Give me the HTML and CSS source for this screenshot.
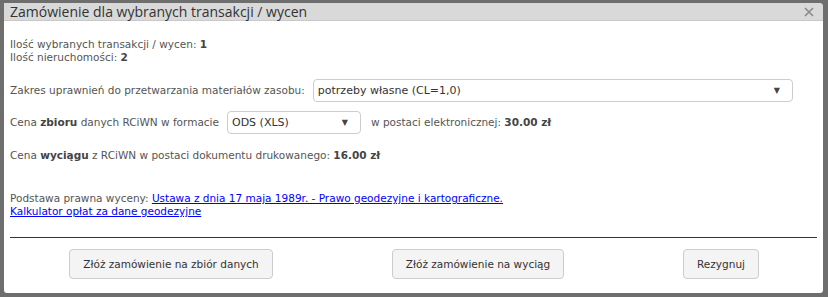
FILE: index.html
```html
<!DOCTYPE html>
<html lang="pl">
  <head>
    <meta charset="UTF-8" />
    <meta name="viewport" content="width=device-width, initial-scale=1.0" />
    <title>Zamówienie</title>
    <link rel="stylesheet" href="styles.css">
  </head>
  <body>
    <div class="dialog">
      <div class="dialog-title">
        <span>Zamówienie dla wybranych transakcji / wycen</span>
        <button class="dialog-close" title="Zamknij">
          <svg width="10" height="10" viewBox="0 0 10 10">
            <path d="M1 1L9 9M9 1L1 9" stroke="#8a8a8a" stroke-width="1.6" />
          </svg>
        </button>
      </div>
      <div class="dialog-body">
        <p class="counts">
          Ilość wybranych transakcji / wycen: <b>1</b><br />
          Ilość nieruchomości: <b>2</b>
        </p>

        <div class="row row-scope">
          <label>Zakres uprawnień do przetwarzania materiałów zasobu:</label>
          <div class="select select-wide">
            <span>potrzeby własne (CL=1,0)</span>
            <i class="arrow">▼</i>
          </div>
        </div>

        <div class="row row-format">
          <label>Cena <b>zbioru</b> danych RCiWN w formacie</label>
          <div class="select select-small">
            <span>ODS (XLS)</span>
            <i class="arrow">▼</i>
          </div>
          <span>w postaci elektronicznej: <b>30.00 zł</b></span>
        </div>

        <p class="row-print">Cena <b>wyciągu</b> z RCiWN w postaci dokumentu drukowanego: <b>16.00 zł</b></p>

        <p class="legal">
          Podstawa prawna wyceny: <a href="#">Ustawa z dnia 17 maja 1989r. - Prawo geodezyjne i kartograficzne.</a><br />
          <a href="#">Kalkulator opłat za dane geodezyjne</a>
        </p>

        <hr />

        <div class="actions">
          <button class="btn btn-set">Złóż zamówienie na zbiór danych</button>
          <button class="btn btn-extract">Złóż zamówienie na wyciąg</button>
          <button class="btn btn-cancel">Rezygnuj</button>
        </div>
      </div>
    </div>
  </body>
</html>
```

FILE: styles.css
```css
:root {
  --main-font: "DejaVu Sans", Verdana, sans-serif;
  --title-font: "Open Sans", "DejaVu Sans", sans-serif;
  --text-color: #555;
  --title-bg: #d9d9d9;
  --overlay: #6e6e6e;
}

html {
  box-sizing: border-box;
  font-family: var(--main-font);
}

*,
*:before,
*:after {
  box-sizing: inherit;
}

body {
  margin: 0;
  background-color: var(--overlay);
  height: 297px;
  overflow: hidden;
}

.dialog {
  margin: 3px 5px 0 4px;
  height: 290px;
  background-color: #fff;
  border-radius: 0 4px 3px 3px;
  display: flex;
  flex-direction: column;
}

.dialog-title {
  height: 18px;
  background-color: var(--title-bg);
  border-bottom: 1px solid #c8c8c8;
  border-radius: 0 4px 0 0;
  display: flex;
  align-items: center;
  justify-content: space-between;
  padding: 0 9px 0 6px;
  font-family: var(--title-font);
  font-size: 14px;
  color: #333;
}

.dialog-close {
  border: 0;
  background: none;
  padding: 0;
  display: flex;
}

.dialog-body {
  padding: 0 6px;
  font-size: 10.5px;
  line-height: 13px;
  color: var(--text-color);
}

.dialog-body b {
  color: #444;
}

.counts {
  margin: 17px 0 0;
}

.row {
  display: flex;
  align-items: center;
}

.row label {
  margin-right: 8px;
}

.row-scope {
  margin-top: 15px;
}

.row-format {
  margin-top: 9px;
}

.select {
  height: 23px;
  border: 1px solid #ccc;
  border-radius: 4px;
  display: flex;
  align-items: center;
  justify-content: space-between;
  padding: 0 12px 0 4px;
  font-size: 11px;
  color: #333;
}

.select-wide {
  width: 480px;
}

.select-small {
  width: 134px;
  margin-right: 10px;
}

.arrow {
  font-style: normal;
  font-size: 8px;
  color: #444;
}

.row-print {
  margin: 15px 0 0;
}

.legal {
  margin: 30px 0 0;
}

.legal a {
  color: #00f;
}

hr {
  margin: 19px 0 0;
  border: 0;
  border-top: 1px solid #333;
}

.actions {
  display: flex;
  padding-top: 11px;
}

.btn {
  height: 30px;
  border: 1px solid #ccc;
  border-radius: 4px;
  background-color: #f4f4f4;
  font-family: var(--main-font);
  font-size: 10.5px;
  color: #333;
  padding: 0;
  white-space: nowrap;
}

.btn-set {
  margin-left: 59px;
  width: 204px;
}

.btn-extract {
  margin-left: 119px;
  width: 172px;
}

.btn-cancel {
  margin-left: 119px;
  width: 76px;
}
```
